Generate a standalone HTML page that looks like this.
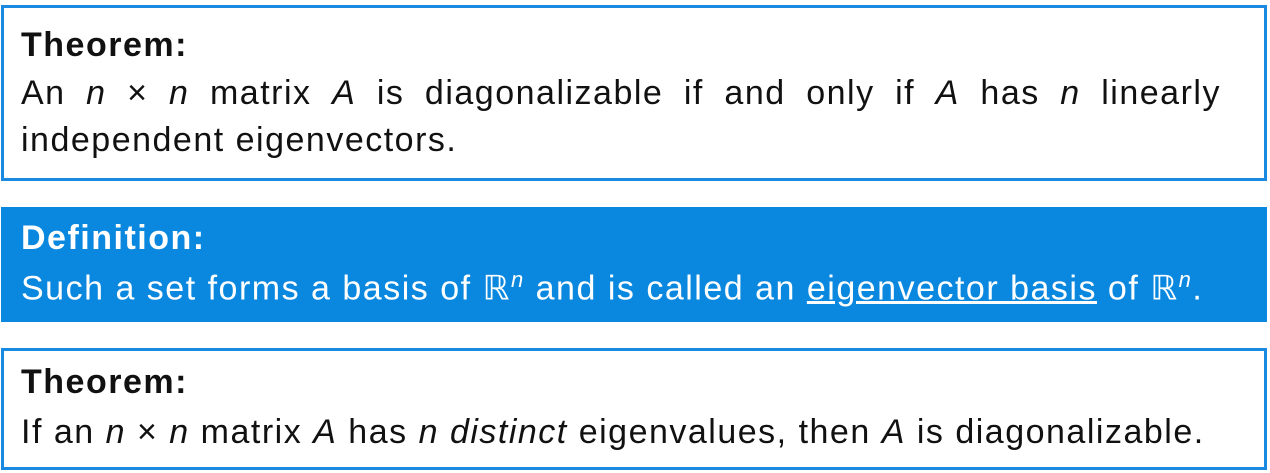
<!DOCTYPE html>
<html><head><meta charset="utf-8"><style>
body{margin:0;width:1270px;height:473px;background:#fff;font-family:"Liberation Sans","DejaVu Sans",sans-serif;font-size:34px;color:#111;position:relative;overflow:hidden;letter-spacing:1.5px}
.box{position:absolute;left:1px;width:1260px;border:3px solid #1a8ae0;}
.b1{top:5px;height:170px}
.b2{top:207px;height:115px;background:#0a88df;border:none;width:1266px;left:1px;color:#fff}
.b3{top:348px;height:116px}
.t{font-weight:bold;position:absolute;left:17px;font-size:34px}
.l{position:absolute;left:17px;white-space:nowrap}
.b2 .t,.b2 .l{left:20px}
i{font-style:italic}
</style></head><body>
<div class="box b1">
<div class="t" style="top:18px">Theorem:</div>
<div class="l" style="top:66px;width:1200px;text-align:justify;text-align-last:justify">An <i>n</i> × <i>n</i> matrix <i>A</i> is diagonalizable if and only if <i>A</i> has <i>n</i> linearly</div>
<div class="l" style="top:113px">independent eigenvectors.</div>
</div>
<div class="box b2">
<div class="t" style="top:12px">Definition:</div>
<div class="l" style="top:60px">Such a set forms a basis of ℝ<sup style="font-size:22px"><i>n</i></sup> and is called an <u>eigenvector basis</u> of ℝ<sup style="font-size:22px"><i>n</i></sup>.</div>
</div>
<div class="box b3">
<div class="t" style="top:12px">Theorem:</div>
<div class="l" style="top:62px">If an <i>n</i> × <i>n</i> matrix <i>A</i> has <i>n</i> <i>distinct</i> eigenvalues, then <i>A</i> is diagonalizable.</div>
</div>
</body></html>
